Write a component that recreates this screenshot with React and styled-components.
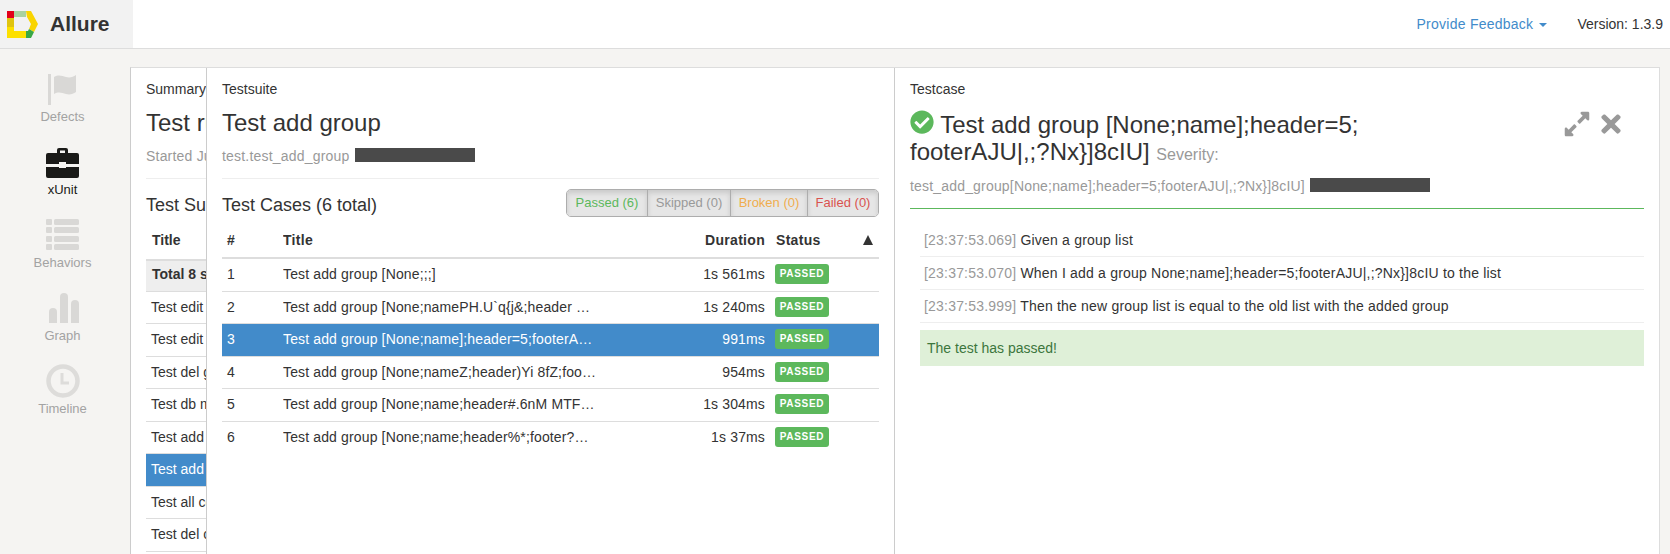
import React from 'react';
import styled, { createGlobalStyle } from 'styled-components';
import { FaCheckCircle, FaExpandAlt, FaTimes } from 'react-icons/fa';

const GlobalStyle = createGlobalStyle`
	html, body {
		margin: 0;
		padding: 0;
		height: 100%;
		overflow: hidden;
		background: #f5f4f2;
	}
	body {
		font-family: 'Liberation Sans', Arial, sans-serif;
		font-size: 14px;
		line-height: 20px;
		color: #333;
	}
`;

const Logo = () => (
	<svg width="31" height="27" viewBox="0 0 31 27">
		<path d="M0 0h7v7H0z" fill="#e2001a" />
		<path d="M7 0h12v6H7z" fill="#a9d2a0" />
		<path d="M19 0h5l7 13-4 8-5-3 2-5-4-7z" fill="#f9d400" />
		<path d="M0 7h7v9H0z" fill="#e0c410" />
		<path d="M0 16h7v4h12v7H0z" fill="#fde000" />
		<path d="M19 20h2l1-2 5 3-3 6h-5z" fill="#3aa845" />
	</svg>
);

const FlagIcon = () => (
	<svg width="32" height="31" viewBox="0 0 32 31" fill="#d9d8d6">
		<rect x="2" y="0" width="3" height="31" />
		<path d="M8 3c5-3 8-1 12 0 4 1 7 0 10-2v17c-3 2-6 3-10 2-4-1-7-3-12 0z" />
	</svg>
);

const BriefcaseIcon = () => (
	<svg width="33" height="31" viewBox="0 0 33 31" fill="#1a1a18">
		<path fillRule="evenodd" d="M11 6V3a2 2 0 0 1 2-2h7a2 2 0 0 1 2 2v3h-3V3.500h-5V6z" />
		<path d="M2 6h29a2 2 0 0 1 2 2v9H20v-2h-7v2H0V8a2 2 0 0 1 2-2z" />
		<path d="M0 20h13v1h7v-1h13v9a2 2 0 0 1-2 2H2a2 2 0 0 1-2-2z" />
	</svg>
);

const ListIcon = () => (
	<svg width="33" height="32" viewBox="0 0 33 32" fill="#d9d8d6">
		{[0, 8, 17, 25].map((y) => (
			<g key={y}>
				<rect x="0" y={y} width="6" height="6" rx="1" />
				<rect x="8" y={y} width="25" height="6" rx="1.500" />
			</g>
		))}
	</svg>
);

const GraphIcon = () => (
	<svg width="33" height="30" viewBox="0 0 33 30" fill="#d9d8d6">
		<path d="M3 30V19a4 4 0 0 1 8 0v11z" />
		<path d="M14 30V4a4 4 0 0 1 8 0v26z" />
		<path d="M25 30V11a4 4 0 0 1 8 0v19z" />
	</svg>
);

const ClockIcon = () => (
	<svg width="34" height="34" viewBox="0 0 34 34" fill="none" stroke="#dddcda">
		<circle cx="17" cy="17" r="14.5" strokeWidth="4.5" />
		<path d="M16 9v10h7" strokeWidth="3" />
	</svg>
);

const navItems = [
	{ label: 'Defects', icon: <FlagIcon /> },
	{ label: 'xUnit', icon: <BriefcaseIcon />, active: true },
	{ label: 'Behaviors', icon: <ListIcon /> },
	{ label: 'Graph', icon: <GraphIcon /> },
	{ label: 'Timeline', icon: <ClockIcon /> },
];

const summaryRows = ['Test edit group', 'Test edit contact', 'Test del group', 'Test db matches', 'Test add contact', 'Test add group', 'Test all contacts', 'Test del contact'];

const cases = [
	{ title: 'Test add group [None;;;]', time: '1s 561ms' },
	{ title: 'Test add group [None;namePH.U`q{j&;header wM;footer]', time: '1s 240ms' },
	{ title: 'Test add group [None;name];header=5;footerAJU|,;?Nx}]8cIU]', time: '991ms', active: true },
	{ title: 'Test add group [None;nameZ;header)Yi 8fZ;footer]', time: '954ms' },
	{ title: 'Test add group [None;name;header#.6nM MTFQ;footer]', time: '1s 304ms' },
	{ title: 'Test add group [None;name;header%*;footer?WWWWWWWW]', time: '1s 37ms' },
];

const steps = [
	{ time: '[23:37:53.069]', text: 'Given a group list' },
	{ time: '[23:37:53.070]', text: 'When I add a group None;name];header=5;footerAJU|,;?Nx}]8cIU to the list' },
	{ time: '[23:37:53.999]', text: 'Then the new group list is equal to the old list with the added group' },
];

const filters = [
	{ label: 'Passed (6)', color: '#5cb85c', width: 80 },
	{ label: 'Skipped (0)', color: '#999', width: 83 },
	{ label: 'Broken (0)', color: '#f0ad4e', width: 77 },
	{ label: 'Failed (0)', color: '#d9534f', width: 71 },
];

const App = () => {
	return (
		<Page>
			<GlobalStyle />
			<Header>
				<Brand>
					<Logo />
					<BrandName>Allure</BrandName>
				</Brand>
				<HeaderRight>
					<Feedback>Provide Feedback<Caret /></Feedback>
					<span>Version: 1.3.9</span>
				</HeaderRight>
			</Header>
			<Body>
				<Sidebar>
					{navItems.map((item) => (
						<NavItem key={item.label} $active={item.active}>
							<NavIcon>{item.icon}</NavIcon>
							<span>{item.label}</span>
						</NavItem>
					))}
				</Sidebar>
				<Main>
					<SummaryPane>
						<PaneLabel>Summary</PaneLabel>
						<Title>Test run</Title>
						<Sub>Started June</Sub>
						<Rule />
						<SectionRow><SectionTitle>Test Suites</SectionTitle></SectionRow>
						<SummaryHead>Title</SummaryHead>
						<SummaryTotal>Total 8 suites</SummaryTotal>
						{summaryRows.map((row, i) => (
							<SummaryRow key={row} $active={i === 5}>{row}</SummaryRow>
						))}
					</SummaryPane>
					<SuitePane>
						<PaneLabel>Testsuite</PaneLabel>
						<Title>Test add group</Title>
						<Sub>test.test_add_group <Redacted /></Sub>
						<Rule />
						<SectionRow>
							<SectionTitle>Test Cases (6 total)</SectionTitle>
							<FilterGroup>
								{filters.map((f) => (
									<FilterButton key={f.label} $color={f.color} $width={f.width}>{f.label}</FilterButton>
								))}
							</FilterGroup>
						</SectionRow>
						<HeadRow>
							<NumCell>#</NumCell>
							<TitleCell>Title</TitleCell>
							<TimeCell>Duration</TimeCell>
							<StatusCell>Status</StatusCell>
							<SortArrow />
						</HeadRow>
						{cases.map((c, i) => (
							<CaseRow key={c.title} $active={c.active}>
								<NumCell>{i + 1}</NumCell>
								<TitleCell>{c.title}</TitleCell>
								<TimeCell>{c.time}</TimeCell>
								<StatusCell><Badge>PASSED</Badge></StatusCell>
							</CaseRow>
						))}
					</SuitePane>
					<CasePane>
						<PaneLabel>Testcase</PaneLabel>
						<CaseHead>
							<CaseTitle>
								<CheckIcon><FaCheckCircle size={24} /></CheckIcon> Test add group [None;name];header=5;<br />
								footerAJU|,;?Nx}]8cIU] <small>Severity:</small>
							</CaseTitle>
							<Actions>
								<FaExpandAlt size={28} />
								<FaTimes size={28} />
							</Actions>
						</CaseHead>
						<CaseSub>test_add_group[None;name];header=5;footerAJU|,;?Nx}]8cIU] <Redacted /></CaseSub>
						<GreenRule />
						<Steps>
							{steps.map((s) => (
								<Step key={s.time}><StepTime>{s.time}</StepTime> {s.text}</Step>
							))}
						</Steps>
						<Alert>The test has passed!</Alert>
					</CasePane>
				</Main>
			</Body>
		</Page>
	);
};

const Page = styled.div`
	width: 1670px;
	height: 554px;
	overflow: hidden;
	display: flex;
	flex-direction: column;
`;

const Header = styled.header`
	flex: none;
	height: 48px;
	display: flex;
	justify-content: space-between;
	background: #fff;
	border-bottom: 1px solid #ddd;
`;

const Brand = styled.div`
	width: 133px;
	box-sizing: border-box;
	padding: 0 0 0 7px;
	display: flex;
	align-items: center;
	gap: 12px;
	background: #f2f2f2;
`;

const BrandName = styled.span`
	font-size: 21px;
	font-weight: 700;
`;

const HeaderRight = styled.div`
	display: flex;
	align-items: center;
	padding-right: 7px;
	gap: 30px;
`;

const Feedback = styled.span`
	color: #428bca;
	display: flex;
	align-items: center;
	letter-spacing: 0.25px;
`;

const Caret = styled.i`
	margin-left: 6px;
	margin-top: 2px;
	border-top: 4px solid #428bca;
	border-left: 4px solid transparent;
	border-right: 4px solid transparent;
`;

const Body = styled.div`
	flex: 1;
	min-height: 0;
	display: flex;
`;

const Sidebar = styled.nav`
	flex: none;
	width: 130px;
	box-sizing: border-box;
	padding: 22px 5px 0 0;
	display: flex;
	flex-direction: column;
	align-items: center;
`;

const NavItem = styled.a`
	height: 73px;
	display: flex;
	flex-direction: column;
	align-items: center;
	font-size: 13px;
	line-height: 18px;
	color: ${(p) => (p.$active ? '#1a1a18' : '#a3a3a3')};
	svg {
		display: block;
	}
`;

const NavIcon = styled.div`
	height: 36px;
	margin-bottom: 1px;
	display: flex;
	align-items: center;
`;

const Main = styled.main`
	flex: 1;
	margin: 18px 10px 0 0;
	display: flex;
	background: #fff;
	border: 1px solid #ddd;
	border-left-color: #ccc;
	border-bottom: 0;
	overflow: hidden;
`;

const Pane = styled.section`
	box-sizing: border-box;
	padding: 11px 15px 0;
	overflow: hidden;
	background: #fff;
`;

const SummaryPane = styled(Pane)`
	flex: none;
	width: 75px;
	padding-right: 0;
	white-space: nowrap;
`;

const SuitePane = styled(Pane)`
	flex: none;
	width: 688px;
	border-left: 1px solid #ccc;
`;

const CasePane = styled(Pane)`
	flex: 1;
	border-left: 1px solid #ccc;
`;

const PaneLabel = styled.div`
	height: 20px;
`;

const Title = styled.h3`
	margin: 11px 0 0;
	font-size: 24px;
	font-weight: 500;
	line-height: 26px;
`;

const Sub = styled.div`
	margin-top: 10px;
	height: 20px;
	color: #999;
	letter-spacing: 0.2px;
`;

const Redacted = styled.span`
	display: inline-block;
	width: 120px;
	height: 14px;
	margin-left: 1px;
	vertical-align: -1px;
	background: #4a4a4a;
`;

const Rule = styled.hr`
	margin: 12px 0 0;
	border: 0;
	border-top: 1px solid #eee;
`;

const SectionRow = styled.div`
	height: 44px;
	display: flex;
	justify-content: space-between;
	align-items: center;
	padding-top: 3px;
	box-sizing: border-box;
`;

const SectionTitle = styled.h4`
	margin: 4px 0 0;
	font-size: 18px;
	font-weight: 500;
`;

const FilterGroup = styled.div`
	display: flex;
	height: 28px;
	box-sizing: border-box;
	border: 1px solid #adadad;
	border-radius: 5px;
	overflow: hidden;
`;

const FilterButton = styled.span`
	width: ${(p) => p.$width}px;
	box-sizing: border-box;
	text-align: center;
	font-size: 13px;
	line-height: 26px;
	color: ${(p) => p.$color};
	background: #e6e6e6;
	box-shadow: inset 0 3px 5px rgba(0, 0, 0, 0.125);
	& + & {
		border-left: 1px solid #adadad;
	}
`;

const HeadRow = styled.div`
	height: 35px;
	box-sizing: border-box;
	display: flex;
	align-items: center;
	font-weight: 700;
	letter-spacing: 0.3px;
	border-bottom: 2px solid #ddd;
	margin-top: 1px;
	padding-bottom: 2px;
`;

const CaseRow = styled.div`
	height: 32.5px;
	box-sizing: border-box;
	padding-bottom: 1px;
	display: flex;
	align-items: center;
	border-bottom: 1px solid #ddd;
	letter-spacing: 0.14px;
	color: ${(p) => (p.$active ? '#fff' : 'inherit')};
	background: ${(p) => (p.$active ? '#428bca' : 'transparent')};
	&:last-child {
		border-bottom: 0;
	}
`;

const NumCell = styled.div`
	flex: none;
	width: 56px;
	padding-left: 5px;
`;

const TitleCell = styled.div`
	flex: none;
	width: 316px;
	overflow: hidden;
	white-space: nowrap;
	text-overflow: ellipsis;
`;

const TimeCell = styled.div`
	flex: none;
	width: 166px;
	text-align: right;
`;

const StatusCell = styled.div`
	flex: none;
	margin-left: 11px;
`;

const SortArrow = styled.i`
	margin-left: auto;
	margin-right: 6px;
	border-bottom: 10px solid #333;
	border-left: 5.5px solid transparent;
	border-right: 5.5px solid transparent;
`;

const Badge = styled.span`
	display: block;
	width: 54px;
	height: 20px;
	margin-left: -1px;
	border-radius: 3px;
	background: #5cb85c;
	color: #fff;
	font-size: 10px;
	font-weight: 700;
	line-height: 19px;
	letter-spacing: 0.7px;
	text-align: center;
`;

const SummaryHead = styled.div`
	height: 35px;
	box-sizing: border-box;
	padding-left: 6px;
	line-height: 32px;
	font-weight: 700;
	margin-top: 1px;
`;

const SummaryTotal = styled.div`
	height: 32.5px;
	box-sizing: border-box;
	padding-left: 6px;
	line-height: 27px;
	font-weight: 700;
	background: #eee;
	border-top: 2px solid #ddd;
	border-bottom: 1px solid #ddd;
`;

const SummaryRow = styled.div`
	height: 32.5px;
	box-sizing: border-box;
	padding-left: 5px;
	line-height: 30px;
	border-bottom: 1px solid #ddd;
	color: ${(p) => (p.$active ? '#fff' : 'inherit')};
	background: ${(p) => (p.$active ? '#428bca' : 'transparent')};
`;

const CaseHead = styled.div`
	display: flex;
	justify-content: space-between;
	margin-top: 11px;
`;

const CaseTitle = styled.h3`
	margin: 0;
	font-size: 24px;
	font-weight: 500;
	line-height: 27px;
	small {
		font-size: 16px;
		color: #999;
	}
`;

const CheckIcon = styled.span`
	color: #5cb85c;
	svg {
		vertical-align: -1px;
	}
`;

const Actions = styled.div`
	display: flex;
	gap: 6px;
	padding: 0 19px 0 0;
	color: #999;
`;

const CaseSub = styled.div`
	margin-top: 8px;
	height: 20px;
	color: #999;
	letter-spacing: 0.18px;
`;

const GreenRule = styled.hr`
	margin: 12px 0 0;
	border: 0;
	border-top: 1px solid #5cb85c;
`;

const Steps = styled.div`
	margin: 15px 0 0 10px;
`;

const Step = styled.div`
	height: 33px;
	box-sizing: border-box;
	padding: 6px 4px 0;
	border-bottom: 1px solid #eee;
	letter-spacing: 0.2px;
`;

const StepTime = styled.span`
	color: #999;
`;

const Alert = styled.div`
	margin: 7px 0 0 10px;
	height: 36px;
	box-sizing: border-box;
	padding: 8px 7px;
	background: #dff0d8;
	color: #3c763d;
`;

export default App;
